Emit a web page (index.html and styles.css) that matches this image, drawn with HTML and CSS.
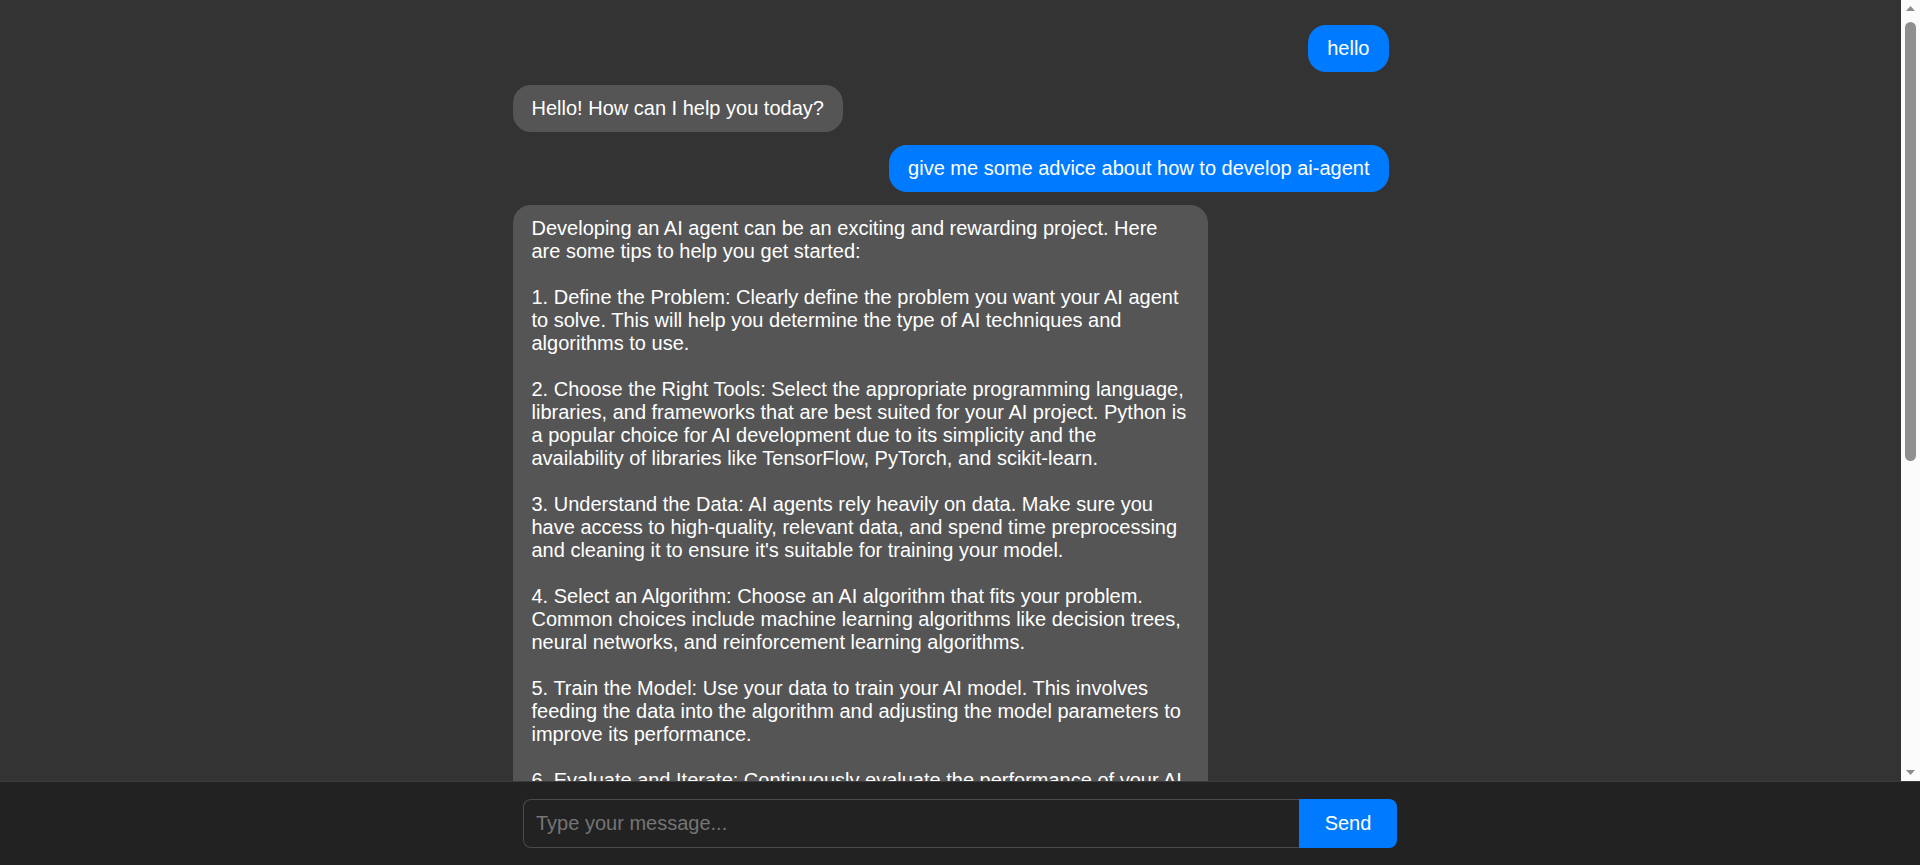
FILE: index.html
```html
<!DOCTYPE html>
<html lang="en">
<head>
<meta charset="utf-8">
<title>Chat</title>
<link rel="stylesheet" href="styles.css">
</head>
<body>
<div class="viewport">
  <main class="messages">
    <div class="thread">
      <div class="msg user">hello</div>
      <div class="msg bot">Hello! How can I help you today?</div>
      <div class="msg user">give me some advice about how to develop ai-agent</div>
      <div class="msg bot">Developing an AI agent can be an exciting and rewarding project. Here are some tips to help you get started:

1. Define the Problem: Clearly define the problem you want your AI agent to solve. This will help you determine the type of AI techniques and algorithms to use.

2. Choose the Right Tools: Select the appropriate programming language, libraries, and frameworks that are best suited for your AI project. Python is a popular choice for AI development due to its simplicity and the availability of libraries like TensorFlow, PyTorch, and scikit-learn.

3. Understand the Data: AI agents rely heavily on data. Make sure you have access to high-quality, relevant data, and spend time preprocessing and cleaning it to ensure it's suitable for training your model.

4. Select an Algorithm: Choose an AI algorithm that fits your problem. Common choices include machine learning algorithms like decision trees, neural networks, and reinforcement learning algorithms.

5. Train the Model: Use your data to train your AI model. This involves feeding the data into the algorithm and adjusting the model parameters to improve its performance.

6. Evaluate and Iterate: Continuously evaluate the performance of your AI agent and iterate on your model to improve its accuracy and efficiency. Use metrics like precision, recall, and F1 score to measure how well it performs.

7. Deploy and Monitor: Once your AI agent is performing well, deploy it in a real-world environment and monitor its performance over time. Be prepared to update and retrain it as new data becomes available.

8. Consider Ethics: Make sure your AI agent is designed and used responsibly. Consider issues like bias, fairness, privacy, and transparency.

9. Stay Updated: The field of AI is constantly evolving. Keep learning about new techniques, tools, and research to improve your skills.

Remember that developing an AI agent takes time, patience, and experimentation. Good luck with your project!</div>
    </div>
  </main>
  <div class="scrollbar" aria-hidden="true">
    <svg class="scroll-arrow" width="19" height="17" viewBox="0 0 19 17"><polygon points="5,11 14,11 9.5,6" fill="#8c8c8c"/></svg>
    <div class="scroll-track">
      <div class="scroll-thumb"></div>
    </div>
    <svg class="scroll-arrow" width="19" height="17" viewBox="0 0 19 17"><polygon points="5,6 14,6 9.5,11" fill="#8c8c8c"/></svg>
  </div>
</div>
<footer class="composer">
  <form class="composer-form">
    <input class="composer-input" type="text" placeholder="Type your message...">
    <button class="composer-send" type="button">Send</button>
  </form>
</footer>
</body>
</html>
```
FILE: styles.css
```css
* {
  box-sizing: border-box;
}

html, body {
  margin: 0;
  height: 100%;
}

body {
  display: flex;
  flex-direction: column;
  height: 100vh;
  background: #333333;
  color: #ffffff;
  font-family: "Liberation Sans", Arial, sans-serif;
  font-size: 20px;
}

.viewport {
  flex: 1;
  min-height: 0;
  display: flex;
}

.messages {
  flex: 1;
  min-width: 0;
  overflow-y: auto;
  scrollbar-width: none;
}

.messages::-webkit-scrollbar {
  display: none;
}

.thread {
  max-width: 900px;
  margin: 0 auto;
  padding: 25px 12px 25px;
  display: flex;
  flex-direction: column;
  gap: 13px;
}

.msg {
  max-width: 657px;
  box-sizing: content-box;
  padding: 12px 19px;
  border-radius: 18px;
  line-height: 23px;
  white-space: pre-wrap;
}

.msg.user {
  align-self: flex-end;
  background: #007bff;
}

.msg.bot {
  align-self: flex-start;
  background: #555555;
}

.scrollbar {
  flex: none;
  width: 19px;
  background: #fbfbfb;
  display: flex;
  flex-direction: column;
}

.scroll-arrow {
  display: block;
  flex: none;
}

.scroll-track {
  flex: 1;
  padding-top: 5px;
}

.scroll-thumb {
  width: 11px;
  height: 439px;
  margin: 0 auto;
  background: #8f8f8f;
  border-radius: 6px;
}

.composer {
  flex: none;
  background: #222222;
  border-top: 1px solid #3c3c3c;
  padding: 17px 0 17px;
}

.composer-form {
  max-width: 900px;
  margin: 0 auto;
  padding: 0 13px;
  display: flex;
  height: 49px;
}

.composer-input {
  flex: 1;
  min-width: 0;
  background: #222222;
  color: #ffffff;
  border: 1px solid #4a4a4a;
  border-right: none;
  border-radius: 8px 0 0 8px;
  padding: 0 12px;
  font-family: inherit;
  font-size: 20px;
  outline: none;
}

.composer-input::placeholder {
  color: #757575;
}

.composer-send {
  flex: none;
  width: 98px;
  background: #007bff;
  color: #ffffff;
  border: none;
  border-radius: 0 8px 8px 0;
  font-family: inherit;
  font-size: 20px;
  padding: 0;
}
```
